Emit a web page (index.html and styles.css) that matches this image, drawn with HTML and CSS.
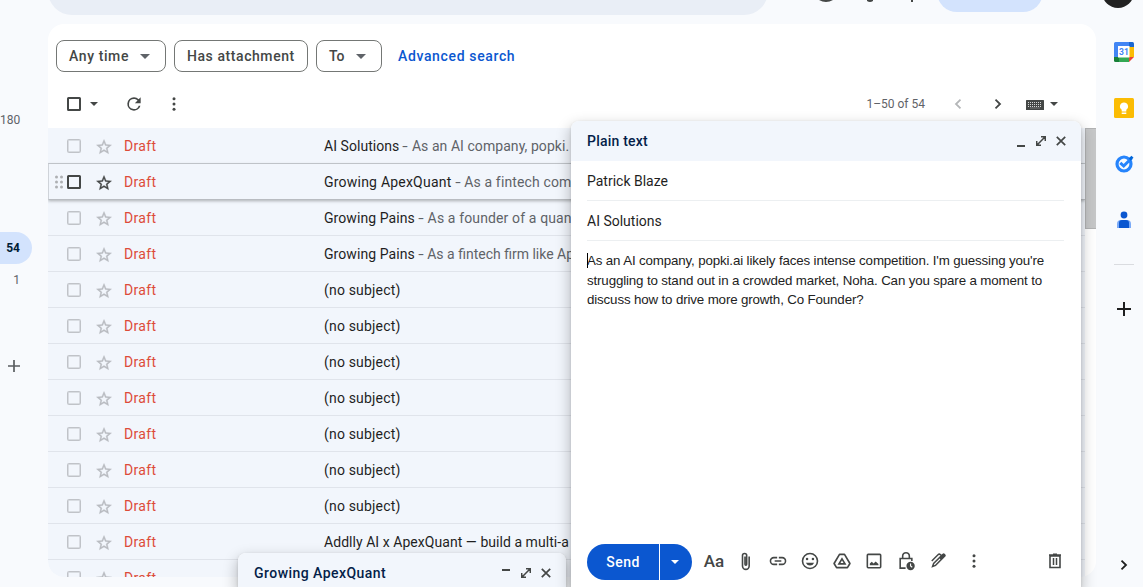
FILE: index.html
```html
<!DOCTYPE html>
<html lang="en">
<head>
<meta charset="utf-8">
<title>Drafts</title>
<link rel="stylesheet" href="styles.css">
</head>
<body>
<svg class="defs" aria-hidden="true">
  <symbol id="star" viewBox="0 0 24 24"><path d="M22 9.24l-7.19-.62L12 2 9.19 8.63 2 9.24l5.46 4.73L5.82 21 12 17.27 18.18 21l-1.63-7.03L22 9.24zM12 15.4l-3.76 2.27 1-4.28-3.32-2.88 4.38-.38L12 6.1l1.71 4.04 4.38.38-3.32 2.88 1 4.28L12 15.4z" stroke="currentColor" stroke-width=".5"/></symbol>
  <symbol id="more" viewBox="0 0 24 24"><circle cx="12" cy="5" r="2"/><circle cx="12" cy="12" r="2"/><circle cx="12" cy="19" r="2"/></symbol>
  <symbol id="close" viewBox="0 0 10 10"><path d="M.8.8l8.400 8.400M9.200.8L.8 9.200" fill="none" stroke="currentColor" stroke-width="1.700"/></symbol>
  <symbol id="expand" viewBox="0 0 10 10"><path d="M5 .7h4.300V5M5 9.300H.7V5M9.200.8L.8 9.200" fill="none" stroke="currentColor" stroke-width="1.500"/></symbol>
  <symbol id="chevron" viewBox="0 0 8 10"><path d="M1.500.7L6 5 1.500 9.300" fill="none" stroke="currentColor" stroke-width="1.800"/></symbol>
</svg>

<header class="top">
  <div class="search"></div>
  <svg class="top-icons" width="100" height="4" viewBox="0 0 100 4"><path d="M0 0h14q-7 4-14 0zM48 0h6v1q-3 2-6 0zM92 0h2v2h-2z"/></svg>
  <div class="pill"></div>
  <div class="avatar"></div>
</header>

<div class="body">
  <nav class="rail">
    <span class="count">180</span>
    <span class="count active">54</span>
    <span class="count">1</span>
    <svg class="rail-plus" width="12" height="12" viewBox="0 0 12 12"><path d="M6 0v12M0 6h12" stroke="#5a5d60" stroke-width="1.700"/></svg>
  </nav>

  <main class="panel">
    <div class="filters">
      <button class="chip any">Any time<i class="tri"></i></button>
      <button class="chip has">Has attachment</button>
      <button class="chip to">To<i class="tri"></i></button>
      <a class="advanced">Advanced search</a>
    </div>
    <div class="toolbar">
      <i class="box dark"></i><i class="tri small"></i>
      <svg class="refresh" width="20" height="20" viewBox="0 0 24 24"><path d="M17.650 6.350A7.960 7.960 0 0 0 12 4a8 8 0 1 0 7.730 10h-2.080A6 6 0 1 1 12 6c1.660 0 3.140.69 4.220 1.780L13 11h7V4l-2.350 2.350z"/></svg>
      <svg class="kebab" width="18" height="18"><use href="#more"/></svg>
      <span class="range">1–50 of 54</span>
      <svg class="prev" width="8" height="10"><use href="#chevron"/></svg>
      <svg class="next" width="8" height="10"><use href="#chevron"/></svg>
      <svg class="keyboard" width="18" height="10" viewBox="0 0 18 10"><rect width="18" height="10" rx=".5"/><path d="M2 2.500h14M2 4.500h14M2 6.500h14" stroke="#d5d6d6" stroke-width="1" stroke-dasharray="1 1"/><path d="M4 8h10" stroke="#999" stroke-width=".6"/></svg>
      <i class="tri small"></i>
    </div>

    <div class="list">
      <div class="row"><i class="box"></i><svg class="star"><use href="#star"/></svg><span class="draft">Draft</span><span class="subject s-ai">AI Solutions</span><span class="snippet n1"> <span class="sep">-</span> As an AI company, popki.</span></div>
      <div class="row hover"><svg class="grip" width="8" height="14" viewBox="0 0 8 14"><circle cx="1.500" cy="2" r="1.500"/><circle cx="6.500" cy="2" r="1.500"/><circle cx="1.500" cy="7" r="1.500"/><circle cx="6.500" cy="7" r="1.500"/><circle cx="1.500" cy="12" r="1.500"/><circle cx="6.500" cy="12" r="1.500"/></svg><i class="box dark"></i><svg class="star"><use href="#star"/></svg><span class="draft">Draft</span><span class="subject s-aq">Growing ApexQuant</span><span class="snippet n2"> <span class="sep">-</span> As a fintech com</span></div>
      <div class="row"><i class="box"></i><svg class="star"><use href="#star"/></svg><span class="draft">Draft</span><span class="subject s-gp">Growing Pains</span><span class="snippet n3"> <span class="sep">-</span> As a founder of a quan</span></div>
      <div class="row"><i class="box"></i><svg class="star"><use href="#star"/></svg><span class="draft">Draft</span><span class="subject s-gp">Growing Pains</span><span class="snippet n4"> <span class="sep">-</span> As a fintech firm like Ap</span></div>
      <div class="row"><i class="box"></i><svg class="star"><use href="#star"/></svg><span class="draft">Draft</span><span class="subject s-no">(no subject)</span></div>
      <div class="row"><i class="box"></i><svg class="star"><use href="#star"/></svg><span class="draft">Draft</span><span class="subject s-no">(no subject)</span></div>
      <div class="row"><i class="box"></i><svg class="star"><use href="#star"/></svg><span class="draft">Draft</span><span class="subject s-no">(no subject)</span></div>
      <div class="row"><i class="box"></i><svg class="star"><use href="#star"/></svg><span class="draft">Draft</span><span class="subject s-no">(no subject)</span></div>
      <div class="row"><i class="box"></i><svg class="star"><use href="#star"/></svg><span class="draft">Draft</span><span class="subject s-no">(no subject)</span></div>
      <div class="row"><i class="box"></i><svg class="star"><use href="#star"/></svg><span class="draft">Draft</span><span class="subject s-no">(no subject)</span></div>
      <div class="row"><i class="box"></i><svg class="star"><use href="#star"/></svg><span class="draft">Draft</span><span class="subject s-no">(no subject)</span></div>
      <div class="row"><i class="box"></i><svg class="star"><use href="#star"/></svg><span class="draft">Draft</span><span class="subject s-ad">Addlly AI x ApexQuant — build a multi-a</span></div>
      <div class="row"><i class="box"></i><svg class="star"><use href="#star"/></svg><span class="draft">Draft</span></div>
    </div>
    <div class="scroll"></div>
  </main>

  <aside class="apps">
    <svg width="20" height="20" viewBox="0 0 20 20"><path d="M4 0h12v4H4v12H0V1.500Q0 0 1.500 0z" fill="#4285f4"/><path d="M15 0h3.500Q20 0 20 1.500V5h-5z" fill="#1967d2"/><path d="M15 5h5v10h-5z" fill="#fbbc04"/><path d="M4 15h11v5H4z" fill="#34a853"/><path d="M0 15h5v5H1.500Q0 20 0 18.500z" fill="#188038"/><path d="M15 15h5l-5 5z" fill="#ea4335"/><path d="M4 4h11.500v11.500H4z" fill="#fff"/><text x="9.900" y="13" text-anchor="middle" class="cal-num">31</text></svg>
    <svg width="20" height="20" viewBox="0 0 20 20"><rect width="20" height="20" rx="1.500" fill="#fbbc04"/><path d="M10 4.500a4 4 0 0 0-2.300 7.300V13.500h4.600v-1.700A4 4 0 0 0 10 4.500zM7.700 14.500h4.600V16H7.700z" fill="#fff"/></svg>
    <svg width="20" height="20" viewBox="0 0 20 20"><circle cx="10" cy="10" r="7" fill="none" stroke="#2684fc" stroke-width="3.200"/><path d="M6.300 8.900L9.700 12 17.500 4.200" fill="none" stroke="#2684fc" stroke-width="3"/><path d="M14.800 4.300L17.500 1.700l2 2-3 3z" fill="#0066da"/></svg>
    <svg width="20" height="20" viewBox="0 0 20 20"><circle cx="10" cy="5" r="3.400" fill="#0b57d0"/><path d="M3 18v-4q0-4 4-4h6q4 0 4 4v4z" fill="#7baaf7"/><path d="M5 18v-5q0-3 3-3h4q3 0 3 3v5z" fill="#0b57d0"/></svg>
    <hr>
    <svg class="add" width="14" height="14" viewBox="0 0 14 14"><path d="M7 0v14M0 7h14" stroke="#1f1f1f" stroke-width="2"/></svg>
    <svg class="collapse" width="8" height="10"><use href="#chevron"/></svg>
  </aside>
</div>

<section class="window mini">
  <div class="titlebar"><span class="title">Growing ApexQuant</span><i class="dash up"></i><svg width="10" height="10"><use href="#expand"/></svg><svg width="10" height="10"><use href="#close"/></svg></div>
</section>

<section class="window compose">
  <div class="titlebar"><span class="title">Plain text</span><i class="dash"></i><svg width="10" height="10"><use href="#expand"/></svg><svg width="10" height="10"><use href="#close"/></svg></div>
  <div class="field f-to">Patrick Blaze</div>
  <div class="field f-sub">AI Solutions</div>
  <div class="message"><i class="caret"></i>As an AI company, popki.ai likely faces intense competition. I'm guessing you're<br>struggling to stand out in a crowded market, Noha. Can you spare a moment to<br>discuss how to drive more growth, Co Founder?</div>
  <div class="actions">
    <button class="send">Send</button><button class="send-more"><i class="tri small white"></i></button>
    <span class="tools">
      <b class="aa">Aa</b>
      <span><svg width="20" height="20" viewBox="0 0 24 24"><path d="M16.500 6v11.500a4 4 0 0 1-8 0V5a2.500 2.500 0 0 1 5 0v10.500a1 1 0 0 1-2 0V6" fill="none" stroke="currentColor" stroke-width="1.900" transform="translate(-.7 .5)"/></svg></span>
      <span><svg width="20" height="20" viewBox="0 0 24 24"><path d="M3.900 12A3.100 3.100 0 0 1 7 8.900h4V7H7a5 5 0 0 0 0 10h4v-1.900H7A3.100 3.100 0 0 1 3.900 12zM8 13h8v-2H8v2zm9-6h-4v1.900h4a3.100 3.100 0 0 1 0 6.200h-4V17h4a5 5 0 0 0 0-10z"/></svg></span>
      <span><svg width="20" height="20" viewBox="0 0 24 24"><circle cx="12" cy="12" r="9" fill="none" stroke="currentColor" stroke-width="1.900"/><circle cx="8.500" cy="9.500" r="1.500"/><circle cx="15.500" cy="9.500" r="1.500"/><path d="M7 14h10a5.400 5.400 0 0 1-10 0z"/></svg></span>
      <span><svg width="20" height="20" viewBox="0 0 24 24"><path d="M9 4h6l6.500 11-3 5h-13l-3-5z" fill="none" stroke="currentColor" stroke-width="2" stroke-linejoin="round"/><path d="M12 9.500l3.600 6H8.400z" fill="none" stroke="currentColor" stroke-width="2"/></svg></span>
      <span><svg width="20" height="20" viewBox="0 0 24 24"><rect x="4" y="4" width="16" height="16" rx="1" fill="none" stroke="currentColor" stroke-width="1.900"/><path d="M7 17v-2l2.300-2 2.200 2 2.500-2.500 3.300 3V17z"/></svg></span>
      <span><svg width="20" height="20" viewBox="0 0 24 24"><path d="M11.500 20.500H5V9h14v3M8 9V6a4 4 0 0 1 8 0v3" fill="none" stroke="currentColor" stroke-width="1.900"/><circle cx="17.500" cy="18" r="5"/><path d="M17.500 15v3l2 1.500" fill="none" stroke="#fff" stroke-width="1.300"/></svg></span>
      <span><svg width="20" height="20" viewBox="0 0 24 24"><path d="M16 4.500l2-1.500q1-.6 2 .4l.8.8q1 1 .3 2L9.500 18 4 20l2-5.500z"/><path d="M7.500 16.500l7-7" stroke="#fff" stroke-width="1.300"/><path d="M4.500 12L12 4.500q1.500-1.500 3 0l1 1" fill="none" stroke="currentColor" stroke-width="1.700"/></svg></span>
      <span class="last"><svg width="18" height="18"><use href="#more"/></svg></span>
    </span>
    <svg class="trash" width="18" height="20" viewBox="0 0 18 20"><path d="M4 5h10v11.500H4zM3 4h12M7 3.400h4" fill="none" stroke="currentColor" stroke-width="1.600"/><path d="M7.500 7v7M10.500 7v7" stroke="currentColor" stroke-width="1.500"/></svg>
  </div>
</section>
</body>
</html>
```
FILE: styles.css
```css
* { box-sizing: border-box; }
body { margin: 0; width: 1143px; height: 587px; overflow: hidden; position: relative; background: #f8fafd; color: #1f1f1f; font: 14px/20px Roboto, "Open Sans", sans-serif; }
svg { display: block; fill: currentColor; flex: none; }
i { display: block; flex: none; }
button { font: inherit; color: inherit; margin: 0; }
.defs { position: absolute; width: 0; height: 0; }

.top { height: 24px; overflow: hidden; display: flex; align-items: flex-start; padding-left: 48px; }
.search { width: 720px; height: 48px; margin-top: -33px; border-radius: 24px; background: #e9eef6; }
.top-icons { margin-left: 51px; margin-right: 18px; color: #444746; }
.pill { width: 106px; height: 40px; margin-top: -28px; border-radius: 20px; background: #d3e3fd; }
.avatar { width: 32px; height: 32px; margin: -24px 0 0 59px; border-radius: 50%; background: #222; }

.body { display: flex; height: 563px; }
.rail { width: 48px; display: flex; flex-direction: column; align-items: flex-start; padding-top: 80px; color: #5f6368; font-size: 12px; }
.count { width: 20px; height: 32px; line-height: 32px; text-align: right; }
.count.active { width: 32px; margin-top: 96px; padding-right: 12px; border-radius: 0 16px 16px 0; background: #d3e3fd; color: #001d35; font-weight: 700; }
.rail-plus { margin: 64px 0 0 8px; }

.panel { width: 1048px; height: 553px; position: relative; background: #fff; border-radius: 16px; overflow: hidden; }
.filters { display: flex; align-items: center; gap: 8px; padding: 16px 8px 0; color: #444746; font-weight: 500; }
.chip { height: 32px; display: flex; align-items: center; justify-content: space-between; padding: 0 15px 0 12px; border: 1px solid #747775; border-radius: 8px; background: #fff; white-space: nowrap; }
.chip.any { width: 110px; letter-spacing: .6px; }
.chip.has { width: 134px; letter-spacing: .57px; padding-right: 0; }
.chip.to { width: 66px; }
.advanced { margin-left: 8px; color: #0b57d0; letter-spacing: .64px; }
.tri { width: 0; height: 0; border: 5px solid transparent; border-top-color: #5f6368; border-bottom: 0; }
.tri.small { border-width: 4px 4px 0; border-top-color: #444746; }
.tri.white { border-top-color: #fff; }

.toolbar { height: 56px; padding: 8px 38px 0 19px; display: flex; align-items: center; color: #444746; }
.box { width: 14px; height: 14px; border: 1.500px solid #c0c3c8; box-shadow: inset 0 0 0 .5px #c0c3c8; border-radius: 1.500px; }
.box.dark { border: 2px solid #444746; box-shadow: none; }
.toolbar > .box + .tri { margin-left: 9px; }
.refresh { margin-left: 26px; }
.kebab { margin-left: 21px; }
.range { margin-left: auto; color: #5f6368; font-size: 12px; }
.prev { margin-left: 29px; transform: scaleX(-1); color: #b4b6b8; }
.next { margin-left: 32px; }
.keyboard { margin: 2px 6px 0 24px; }

.list { width: 1037px; font-size: 14px; }
.row { height: 36px; display: flex; align-items: center; padding-left: 19px; background: #f2f6fc; border-bottom: 1px solid #e0e4eb; white-space: pre; }
.row:first-child { border-color: #c9cdd3; }
.row.hover { padding-left: 6px; border-left: 1px solid #cfd3d9; box-shadow: 0 1px 3px rgba(60,64,67,.4); border-bottom-color: #b9bcc1; position: relative; }
.grip { color: #aeb0b3; margin-right: 4px; }
.star { width: 18px; height: 18px; margin: 2px 11px 0 14px; color: #b8bbc0; }
.hover .star { color: #444746; }
.draft { width: 200px; color: #dd4b39; letter-spacing: .35px; }
.s-ai { letter-spacing: .05px; }
.s-aq { letter-spacing: .22px; }
.s-gp { letter-spacing: .08px; }
.s-no { letter-spacing: .18px; }
.s-ad { letter-spacing: .05px; }
.snippet { color: #5f6368; }
.sep { display: inline-block; transform: scaleX(1.4); margin: 0 1px 0 .5px; }
.n1 { letter-spacing: .06px; }
.n2 { letter-spacing: .14px; }
.n3 { letter-spacing: .13px; }
.n4 { letter-spacing: 0; }
.scroll { position: absolute; right: 0; top: 104px; width: 11px; height: 101px; background: #c6c7c8; border: 1px solid #b2b3b4; border-right: 0; }

.apps { width: 47px; display: flex; flex-direction: column; align-items: center; gap: 36px; padding: 18px 0 17px 9px; }
.apps hr { width: 20px; height: 1px; margin: -2px 0 0; border: 0; background: #dadce0; }
.add { margin-top: 1px; }
.collapse { margin-top: auto; }
.cal-num { font: 700 8.5px Roboto, sans-serif; fill: #4285f4; }

.window { position: absolute; background: #fff; border-radius: 8px 8px 0 0; box-shadow: 0 6px 14px 2px rgba(0,0,0,.22), 0 1px 3px rgba(0,0,0,.14); }
.mini { left: 238px; top: 553px; width: 328px; height: 34px; }
.compose { left: 571px; top: 121px; width: 510px; height: 466px; display: flex; flex-direction: column; }
.titlebar { height: 40px; display: flex; align-items: center; gap: 10px; padding: 0 15px 0 16px; background: #f2f6fc; border-radius: 8px 8px 0 0; color: #444746; }
.mini .titlebar { height: 34px; padding-top: 6px; }
.title { margin-right: auto; color: #041e49; font-weight: 500; letter-spacing: .22px; }
.mini .title { letter-spacing: .46px; }
.dash { width: 8px; height: 2px; background: #444746; margin: 9px 1px 0 0; }
.dash.up { margin-top: -7px; }
.field { height: 40px; line-height: 40px; margin: 0 17px 0 16px; border-bottom: 1px solid #eceff1; }
.message { position: relative; padding: 10px 16px; font: 13.330px/19.500px "Liberation Sans", Arial, sans-serif; letter-spacing: -.145px; color: #222; white-space: nowrap; }
.caret { position: absolute; left: 16px; top: 12px; width: 1px; height: 15px; background: #000; }
.actions { margin-top: auto; height: 43px; display: flex; align-items: flex-start; padding: 0 17px 0 16px; color: #444746; }
.send, .send-more { height: 36px; border: 0; background: #0b57d0; color: #fff; }
.send { width: 72px; padding: 0; border-radius: 18px 0 0 18px; font-weight: 500; letter-spacing: .5px; }
.send-more { width: 32px; margin-left: 1px; padding: 0 11px; border-radius: 0 18px 18px 0; }
.tools { display: flex; height: 36px; margin: -1px 0 0 6px; }
.tools > * { width: 32px; display: flex; align-items: center; justify-content: center; }
.aa { font-size: 17px; font-weight: 500; }
.tools .last { margin-left: 4px; }
.trash { margin: 7px 0 0 auto; }
```
